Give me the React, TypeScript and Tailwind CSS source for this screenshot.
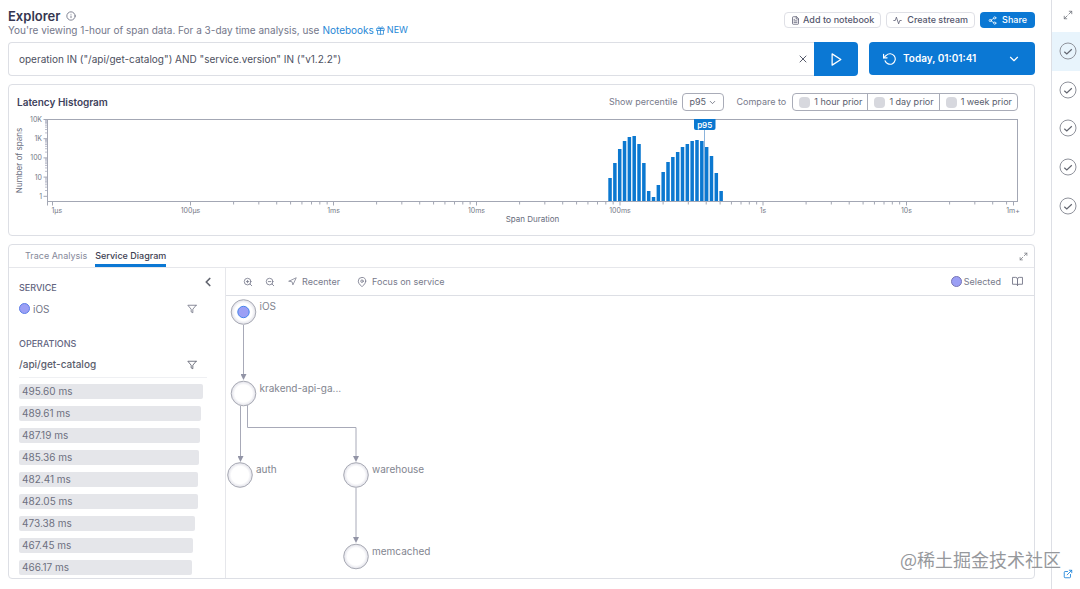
import type { ReactNode } from 'react';
import {
  FiActivity,
  FiBookOpen,
  FiChevronDown,
  FiChevronLeft,
  FiExternalLink,
  FiFileText,
  FiFilter,
  FiGift,
  FiInfo,
  FiMapPin,
  FiMaximize2,
  FiNavigation,
  FiPlay,
  FiRotateCcw,
  FiShare2,
  FiX,
  FiZoomIn,
  FiZoomOut,
} from 'react-icons/fi';

const BAR_HEIGHTS = [
  23, 38, 52, 60, 64, 65, 57, 38, 10, 4, 16, 29, 39, 44, 49, 54, 57, 60, 61, 60, 54, 45, 28, 10,
];

const DECADE_X = 143.2;
const DECADE_Y = 19.2;
const PLOT = { left: 38.5, right: 1008.5, top: 6.5, bottom: 88.5 };

const X_LABELS = [
  { x: 181.5, text: '100µs' },
  { x: 324.5, text: '1ms' },
  { x: 467.5, text: '10ms' },
  { x: 611, text: '100ms' },
  { x: 754, text: '1s' },
  { x: 897.5, text: '10s' },
];

const Y_LABELS = ['10K', '1K', '100', '10', '1'];

const MINOR = [2, 3, 4, 5, 6, 7, 8, 9];

const OPERATIONS = [
  { label: '495.60 ms', value: 495.6 },
  { label: '489.61 ms', value: 489.61 },
  { label: '487.19 ms', value: 487.19 },
  { label: '485.36 ms', value: 485.36 },
  { label: '482.41 ms', value: 482.41 },
  { label: '482.05 ms', value: 482.05 },
  { label: '473.38 ms', value: 473.38 },
  { label: '467.45 ms', value: 467.45 },
  { label: '466.17 ms', value: 466.17 },
];

const NODES = [
  { id: 'ios', x: 17.5, y: 16, label: 'iOS', selected: true },
  { id: 'gateway', x: 17.5, y: 97.5, label: 'krakend-api-ga...', selected: false },
  { id: 'auth', x: 14, y: 179, label: 'auth', selected: false },
  { id: 'warehouse', x: 130, y: 179, label: 'warehouse', selected: false },
  { id: 'memcached', x: 130, y: 260.5, label: 'memcached', selected: false },
];

const EDGES = ['M17.5 29V79', 'M14.5 110V161', 'M21.5 109V131.5H130V161', 'M130 192V242'];

function Histogram() {
  const xTicks: number[] = [];
  X_LABELS.forEach(({ x }) =>
    MINOR.forEach((m) => {
      const tick = x + DECADE_X * Math.log10(m);
      if (x !== 181.5 - DECADE_X && tick < 1002) xTicks.push(tick);
    }),
  );
  const yTicks: number[] = [];
  [1, 2, 3, 4].forEach((d) =>
    MINOR.forEach((m) => yTicks.push(PLOT.top + DECADE_Y * (d - Math.log10(m)))),
  );

  return (
    <svg
      viewBox="0 0 1025 122"
      className="block h-auto w-full"
      role="img"
      aria-label="Latency histogram"
      fontFamily="Inter, sans-serif"
    >
      <g stroke="#a3a7b4" fill="none">
        <rect
          x={PLOT.left}
          y={PLOT.top}
          width={PLOT.right - PLOT.left}
          height={PLOT.bottom - PLOT.top}
        />
        {yTicks.map((y) => (
          <path key={y} d={`M36 ${y}h2`} stroke="#bcbecd" />
        ))}
        {Y_LABELS.map((label, i) => (
          <path key={label} d={`M34.5 ${PLOT.top + i * DECADE_Y}h4`} />
        ))}
        {xTicks.map((x) => (
          <path key={x} d={`M${x} ${PLOT.bottom}v3`} />
        ))}
        {X_LABELS.map(({ x }) => (
          <path key={x} d={`M${x} ${PLOT.bottom}v4`} />
        ))}
        <path d="M38.5 88.5v4M43.5 88.5v4M1004.5 88.5v4" />
      </g>
      <g fill="#757986" fontSize="7">
        {Y_LABELS.map((label, i) => (
          <text key={label} x="33" y={PLOT.top + i * DECADE_Y + 2.5} textAnchor="end">
            {label}
          </text>
        ))}
        <text x="42.5" y="99.5">
          1µs
        </text>
        {X_LABELS.map(({ x, text }) => (
          <text key={text} x={x} y="99.5" textAnchor="middle">
            {text}
          </text>
        ))}
        <text x="1004" y="99.5" textAnchor="middle">
          1m+
        </text>
      </g>
      <g fill="#686c7c" fontSize="8">
        <text x="523.5" y="108.5" textAnchor="middle">
          Span Duration
        </text>
        <text transform="translate(13 47.5) rotate(-90)" textAnchor="middle">
          Number of spans
        </text>
      </g>
      <g fill="#0b78d0">
        {BAR_HEIGHTS.map((h, i) => (
          <rect key={i} x={599.3 + i * 4.83} y={88 - h} width="3.5" height={h} />
        ))}
      </g>
      <path d="M695.5 17V88" stroke="#8cb4dc" />
      <path d="M685 6h21.500v9a2 2 0 0 1-2 2h-17.500a2 2 0 0 1-2-2z" fill="#0b78d0" />
      <text x="695.7" y="14.500" fill="#fff" fontSize="8" fontWeight="600" textAnchor="middle">
        p95
      </text>
    </svg>
  );
}

function ServiceDiagram() {
  return (
    <svg
      width="240"
      height="282"
      viewBox="0 0 240 282"
      className="block"
      role="img"
      aria-label="Service diagram"
      fontFamily="Inter, sans-serif"
    >
      <defs>
        <marker
          id="arrow"
          viewBox="0 0 6 6"
          refX="1"
          refY="3"
          markerWidth="6"
          markerHeight="6"
          markerUnits="userSpaceOnUse"
          orient="auto"
        >
          <path d="M0 0L6 3L0 6z" fill="#9294a6" />
        </marker>
        <radialGradient id="shade">
          <stop offset="70%" stopColor="#fff" />
          <stop offset="100%" stopColor="#e0e0e8" />
        </radialGradient>
      </defs>
      <g fill="none" stroke="#a8aab8">
        {EDGES.map((d) => (
          <path key={d} d={d} markerEnd="url(#arrow)" />
        ))}
      </g>
      {NODES.map((n) => (
        <g key={n.id}>
          <circle cx={n.x} cy={n.y} r="12.3" fill="url(#shade)" stroke="#a8aab4" />
          {n.selected && <circle cx={n.x} cy={n.y} r="5.700" fill="#9b9ff5" stroke="#4484ec" />}
          <text x={n.x + 16} y={n.y - 2} fontSize="10" fill="#82858f">
            {n.label}
          </text>
        </g>
      ))}
    </svg>
  );
}

function PriorToggle({ children }: { children: ReactNode }) {
  return (
    <label className="flex items-center gap-1 pr-[5px] pl-[6px] text-[9px] text-[#595d6d]">
      <input type="checkbox" className="size-[11px] appearance-none rounded-sm bg-[#d7d8de]" />
      <span>{children}</span>
    </label>
  );
}

function StatusCheck() {
  return (
    <svg width="18" height="18" viewBox="0 0 18 18" fill="none" aria-hidden="true">
      <circle cx="9" cy="9" r="8" stroke="#8f929b" />
      <path d="M5.300 9.800l2.500 2.200 5-4.700" stroke="#62656f" strokeWidth="1.200" />
    </svg>
  );
}

export default function App() {
  return (
    <div className="relative flex min-h-screen bg-white font-['Inter',sans-serif] text-[#595d6d]">
      <main className="flex min-w-0 flex-1 flex-col pr-4 pb-[10px] pl-2">
        <header className="flex h-[42px] justify-between pt-2">
          <div>
            <h1 className="flex items-center gap-[6px] text-[13px] leading-4 font-semibold text-[#35364f]">
              Explorer
              <FiInfo size={10} className="text-[#6a6d80]" />
            </h1>
            <p className="flex items-center gap-[3px] text-[10px] leading-3 text-[#74778a]">
              <span>You're viewing 1-hour of span data. For a 3-day time analysis, use</span>
              <a href="#notebooks" className="flex items-center gap-[2px] text-[#2787d6]">
                Notebooks
                <FiGift size={9} />
                <span className="text-[9px]">NEW</span>
              </a>
            </p>
          </div>
          <div className="flex items-start gap-[5px] pt-1 text-[9px] font-medium text-[#55576e]">
            <button className="flex h-4 items-center gap-[3px] rounded-sm border border-[#dfe0e6] px-[6px]">
              <FiFileText size={9} />
              Add to notebook
            </button>
            <button className="flex h-4 items-center gap-[5px] rounded-sm border border-[#dfe0e6] px-[6px]">
              <FiActivity size={9} />
              Create stream
            </button>
            <button className="flex h-4 items-center gap-[5px] rounded-sm bg-[#0b78d4] px-2 text-white">
              <FiShare2 size={9} />
              Share
            </button>
          </div>
        </header>

        <div className="flex h-[34px] gap-[11px]">
          <form className="flex min-w-0 flex-1" onSubmit={(e) => e.preventDefault()}>
            <div className="flex min-w-0 flex-1 items-center rounded-l-sm border border-r-0 border-[#dddfe5] pr-[5px] pl-[10px]">
              <input
                type="text"
                aria-label="Query"
                className="min-w-0 flex-1 text-[10px] text-[#4d5060] outline-none"
                defaultValue={'operation IN ("/api/get-catalog") AND "service.version" IN ("v1.2.2")'}
              />
              <button type="button" aria-label="Clear query">
                <FiX size={12} />
              </button>
            </div>
            <button
              type="submit"
              aria-label="Run query"
              className="flex w-[44px] items-center justify-center rounded-r-sm bg-[#0b78d4] text-white"
            >
              <FiPlay size={15} />
            </button>
          </form>
          <button className="flex h-[33px] w-[166px] items-center gap-[6px] rounded-sm bg-[#0b78d4] px-[14px] text-[10px] font-semibold text-white">
            <FiRotateCcw size={14} />
            Today, 01:01:41
            <FiChevronDown size={14} className="ml-auto" />
          </button>
        </div>

        <section className="mt-2 rounded-sm border border-[#dddfe5]">
          <div className="flex h-7 items-center pt-[6px] pr-4 pl-2">
            <h2 className="text-[10px] font-semibold text-[#40425c]">Latency Histogram</h2>
            <label htmlFor="percentile" className="ml-auto text-[9px] text-[#777a8b]">
              Show percentile
            </label>
            <span className="relative ml-[5px] flex">
              <select
                id="percentile"
                className="h-[18px] w-[42px] appearance-none rounded-sm border border-[#a9acb8] pl-[6px] text-[9px]"
              >
                <option>p95</option>
              </select>
              <FiChevronDown
                size={9}
                className="pointer-events-none absolute top-[5px] right-[7px]"
              />
            </span>
            <span className="ml-3 text-[9px] text-[#777a8b]">Compare to</span>
            <div className="ml-[6px] flex h-[18px] divide-x divide-[#a9acb8] rounded-sm border border-[#a9acb8]">
              <PriorToggle>1 hour prior</PriorToggle>
              <PriorToggle>1 day prior</PriorToggle>
              <PriorToggle>1 week prior</PriorToggle>
            </div>
          </div>
          <Histogram />
        </section>

        <section className="mt-2 flex flex-1 flex-col rounded-sm border border-[#dddfe5]">
          <div className="flex h-[23px] items-stretch gap-2 border-b border-[#e6e7eb] pr-[6px] pl-4 text-[9px]">
            <button className="text-[#85889a]">Trace Analysis</button>
            <button className="border-b-3 border-[#0b78d4] pt-[3px] font-medium text-[#3e4152]">
              Service Diagram
            </button>
            <button aria-label="Expand panel" className="ml-auto text-[#74777f]">
              <FiMaximize2 size={9} />
            </button>
          </div>
          <div className="flex flex-1">
            <div className="w-[217px] border-r border-[#e6e7eb] pt-[7px] pr-[10px] pl-[10px]">
              <div className="flex h-[14px] items-start justify-between">
                <h3 className="pt-[7px] text-[9px] leading-3 font-medium text-[#63657f]">SERVICE</h3>
                <button aria-label="Collapse panel" className="text-[#62656f]">
                  <FiChevronLeft size={14} strokeWidth={3} />
                </button>
              </div>
              <div className="flex h-[27px] items-end gap-[3px] pr-[18px] text-[10px] leading-[14px] text-[#737687]">
                <span className="mb-[2px] size-[11px] rounded-full border border-[#5d7ee8] bg-[#9b9ff5]" />
                iOS
                <button aria-label="Filter by service" className="mb-[2px] ml-auto">
                  <FiFilter size={10} />
                </button>
              </div>
              <h3 className="mt-[22px] text-[9px] leading-3 font-medium text-[#63657f]">
                OPERATIONS
              </h3>
              <div className="mt-[2px] mr-2 flex h-[26px] items-center justify-between border-b border-[#eff0f3] pr-[10px] text-[10px] font-medium text-[#595c6b]">
                /api/get-catalog
                <button aria-label="Filter by operation">
                  <FiFilter size={10} />
                </button>
              </div>
              <ul className="mt-[6px] flex flex-col gap-[7px] pr-3">
                {OPERATIONS.map((op) => (
                  <li
                    key={op.label}
                    className="h-[15px] rounded-xs bg-[#e5e6ea] pl-[3px] text-[10px] leading-[15px] text-[#6d7080]"
                    style={{ width: `${(op.value / 495.6) * 100}%` }}
                  >
                    {op.label}
                  </li>
                ))}
              </ul>
            </div>
            <div className="min-w-0 flex-1">
              <div className="flex h-7 items-center border-b border-[#dddfe5] pr-[11px] pl-[17px] text-[9px] text-[#777a8b]">
                <button aria-label="Zoom in">
                  <FiZoomIn size={10} />
                </button>
                <button aria-label="Zoom out" className="ml-3">
                  <FiZoomOut size={10} />
                </button>
                <button className="ml-[13px] flex items-center gap-[5px]">
                  <FiNavigation size={9} />
                  Recenter
                </button>
                <button className="ml-[17px] flex items-center gap-[5px]">
                  <FiMapPin size={10} />
                  Focus on service
                </button>
                <span className="ml-auto flex items-center gap-[2px]">
                  <span className="size-[11px] rounded-full border border-[#7775b5] bg-[#9b9ff5]" />
                  Selected
                </span>
                <button aria-label="Open guide" className="ml-[11px]">
                  <FiBookOpen size={11} />
                </button>
              </div>
              <ServiceDiagram />
            </div>
          </div>
        </section>
      </main>

      <aside className="flex w-[29px] flex-col items-center border-l border-[#dddfe5] pl-[4px]">
        <button
          aria-label="Expand sidebar"
          className="flex h-8 items-center pb-[3px] text-[#74777f]"
        >
          <FiMaximize2 size={10} />
        </button>
        <nav className="-ml-[4px] flex h-[193px] flex-col self-stretch">
          {['Overview', 'Services', 'Traces', 'Metrics', 'Alerts'].map((name, i) => (
            <button
              key={name}
              aria-label={name}
              className={
                i === 0
                  ? 'flex flex-1 items-center justify-center bg-[#e8f4fc] pl-[4px]'
                  : 'flex flex-1 items-center justify-center pl-[4px]'
              }
            >
              <StatusCheck />
            </button>
          ))}
        </nav>
        <a href="#open" aria-label="Open in new window" className="mt-auto mb-[10px] text-[#1580d8]">
          <FiExternalLink size={10} />
        </a>
      </aside>

      <span className="pointer-events-none absolute right-[19px] bottom-[17px] font-['Noto_Sans_CJK_SC',sans-serif] text-[18px] leading-[26px] text-[#96989c]">
        @稀土掘金技术社区
      </span>
    </div>
  );
}
